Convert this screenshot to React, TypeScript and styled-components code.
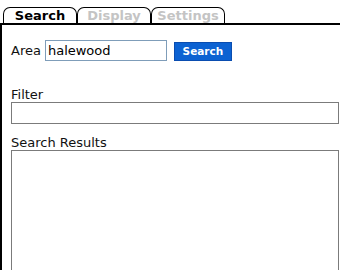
import React from "react";
import styled, { createGlobalStyle } from "styled-components";

const GlobalStyle = createGlobalStyle`
  html, body {
    margin: 0;
    padding: 0;
    background: #fff;
    font-family: "DejaVu Sans", Verdana, sans-serif;
    font-size: 13px;
    color: #111;
  }
`;

/* Tab strip */
const TabBar = styled.div`
  display: flex;
  padding: 7px 0 0 3px;
  height: 16px;
`;

const Tab = styled.div<{ $active?: boolean }>`
  box-sizing: border-box;
  width: 74px;
  height: 16px;
  border: 1px solid #000;
  border-bottom: none;
  border-radius: 7px 7px 0 0;
  display: flex;
  align-items: center;
  justify-content: center;
  font-weight: bold;
  font-size: 13px;
  line-height: 14px;
  padding-top: 1px;
  background: #fff;
  color: ${({ $active }) => ($active ? "#000" : "#c4c4c4")};
`;

/* Page Layout */
const Panel = styled.div`
  box-sizing: border-box;
  border-top: 2px solid #000;
  border-left: 2px solid #000;
  padding: 15px 1px 0 9px;
  height: 247px;
  overflow: hidden;
`;

const AreaRow = styled.div`
  display: flex;
  align-items: baseline;
`;

const Label = styled.label`
  display: block;
  font-size: 13px;
  line-height: 15px;
`;

const AreaLabel = styled(Label)`
  margin-right: 4px;
`;

const AreaInput = styled.input`
  box-sizing: border-box;
  width: 122px;
  height: 21px;
  border: 1px solid #7f9db9;
  padding: 0 2px;
  font-family: "DejaVu Sans", Verdana, sans-serif;
  font-size: 13px;
  color: #000;
  outline: none;
`;

const SearchButton = styled.button`
  box-sizing: border-box;
  margin-left: 7px;
  width: 58px;
  height: 19px;
  align-self: center;
  margin-top: 1px;
  background: #0c62d2;
  border: 1px solid #0a4db0;
  color: #fff;
  font-family: "DejaVu Sans", Verdana, sans-serif;
  font-weight: bold;
  font-size: 10.5px;
  padding: 0;
`;

const FieldLabel = styled(Label)<{ $gap: number }>`
  margin-top: ${({ $gap }) => $gap}px;
`;

const FilterBox = styled.input`
  box-sizing: border-box;
  display: block;
  width: 328px;
  height: 22px;
  border: 1px solid #7b7b7b;
  outline: none;
`;

const ResultsBox = styled.div`
  box-sizing: border-box;
  width: 328px;
  height: 130px;
  border: 1px solid #7b7b7b;
`;

export default function App() {
  return (
    <>
      <GlobalStyle />
      <TabBar>
        <Tab $active>Search</Tab>
        <Tab>Display</Tab>
        <Tab>Settings</Tab>
      </TabBar>
      <Panel>
        <AreaRow>
          <AreaLabel>Area</AreaLabel>
          <AreaInput defaultValue="halewood" />
          <SearchButton>Search</SearchButton>
        </AreaRow>
        <FieldLabel $gap={26}>Filter</FieldLabel>
        <FilterBox />
        <FieldLabel $gap={11}>Search Results</FieldLabel>
        <ResultsBox />
      </Panel>
    </>
  );
}
